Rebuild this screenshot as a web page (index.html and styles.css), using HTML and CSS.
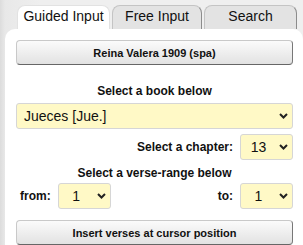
FILE: index.html
```html
<!DOCTYPE html>
<html lang="en">
<head>
    <meta charset="UTF-8">
    <meta name="viewport" content="width=device-width, initial-scale=1.0">
    <title>Bible verse picker</title>
    <link rel="stylesheet" href="styles.css">
</head>
<body>
    <div class="wrap">
        <div class="tabs">
            <div class="tab active">Guided Input</div>
            <div class="tab">Free Input</div>
            <div class="tab">Search</div>
        </div>
        <div class="panel">
            <button class="btn" type="button">Reina Valera 1909 (spa)</button>

            <div class="label center">Select a book below</div>
            <span class="pick book">
                <select>
                    <option>Jueces [Jue.]</option>
                </select>
                <svg class="chev" width="9" height="6" viewBox="0 0 9 6"><path d="M1 1l3.5 3.5L8 1" fill="none" stroke="#222" stroke-width="2"/></svg>
            </span>

            <div class="row right">
                <span class="label">Select a chapter:</span>
                <span class="pick num">
                    <select>
                        <option>13</option>
                    </select>
                    <svg class="chev" width="9" height="6" viewBox="0 0 9 6"><path d="M1 1l3.5 3.5L8 1" fill="none" stroke="#222" stroke-width="2"/></svg>
                </span>
            </div>

            <div class="label center verse-title">Select a verse-range below</div>
            <div class="row between">
                <div class="row">
                    <span class="label">from:</span>
                    <span class="pick num">
                        <select>
                            <option>1</option>
                        </select>
                        <svg class="chev" width="9" height="6" viewBox="0 0 9 6"><path d="M1 1l3.5 3.5L8 1" fill="none" stroke="#222" stroke-width="2"/></svg>
                    </span>
                </div>
                <div class="row">
                    <span class="label">to:</span>
                    <span class="pick num">
                        <select>
                            <option>1</option>
                        </select>
                        <svg class="chev" width="9" height="6" viewBox="0 0 9 6"><path d="M1 1l3.5 3.5L8 1" fill="none" stroke="#222" stroke-width="2"/></svg>
                    </span>
                </div>
            </div>

            <button class="btn insert" type="button">Insert verses at cursor position</button>
        </div>
    </div>
</body>
</html>
```

FILE: styles.css
```css
body {
    margin: 0;
    font-family: "Liberation Sans", Arial, sans-serif;
    background: linear-gradient(to bottom, #f1f1f1, #e6e6e6);
    color: #111;
    height: 245px;
    overflow: hidden;
}
.wrap {
    padding: 5px 0 0 5px;
    background: linear-gradient(to right, #dcdcdc 0, #e8e8e8 5px, #efefef 40px);
    height: 245px;
    box-sizing: border-box;
}
.tabs {
    display: flex;
    gap: 2px;
    padding-left: 12px;
    height: 24px;
}
.tab {
    width: 93px;
    box-sizing: border-box;
    border: 1px solid #c4c4c4;
    border-right-color: #8c8c8c;
    border-bottom: none;
    border-radius: 8px 8px 0 0;
    background: #e3e3e3;
    font-size: 14px;
    text-align: center;
    line-height: 21px;
}
.tab:nth-child(2) {
    width: 90px;
}
.tab.active {
    background: #fff;
    border-color: #e2e2e2;
}
.panel {
    background: #fff;
    border-radius: 10px 10px 0 0;
    padding: 11px 10px 0 11px;
    height: 216px;
    box-sizing: border-box;
}
.btn {
    display: block;
    width: 100%;
    height: 25px;
    font-family: inherit;
    font-size: 11px;
    font-weight: bold;
    color: #111;
    background: linear-gradient(to bottom, #fbfbfb, #e2e2e2);
    border: 1px solid #c9c9c9;
    border-right-color: #777;
    border-bottom-color: #666;
    border-radius: 4px;
    padding: 0;
}
.label {
    font-size: 12px;
    font-weight: bold;
}
.center {
    text-align: center;
    margin: 19px 0 5px;
    line-height: 14px;
}
.verse-title {
    margin: 6px 0 3px;
}
.pick {
    position: relative;
    display: inline-block;
}
.pick select {
    appearance: none;
    -webkit-appearance: none;
    background: #fff9c6;
    border: 1px solid #d6d6d6;
    border-radius: 3px;
    font-family: inherit;
    font-size: 14px;
    color: #111;
    height: 26px;
    margin: 0;
    outline: none;
}
.chev {
    position: absolute;
    right: 5px;
    top: 10px;
    pointer-events: none;
}
.book {
    display: block;
}
.book select {
    width: 100%;
    padding: 0 0 0 7px;
}
.num select {
    width: 53px;
    text-align-last: center;
    padding: 0 16px 0 0;
}
.row {
    display: flex;
    align-items: center;
    gap: 7px;
}
.right {
    justify-content: flex-end;
    margin-top: 5px;
}
.between {
    justify-content: space-between;
    padding-left: 4px;
}
.insert {
    margin-top: 11px;
}
```
